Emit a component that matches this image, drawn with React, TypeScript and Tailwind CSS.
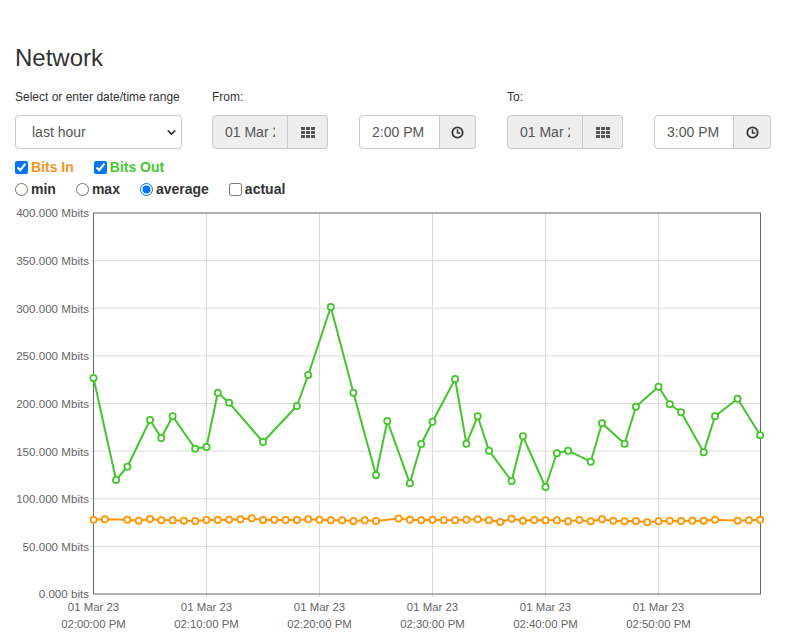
import { ChevronDown } from "lucide-react";

// Network traffic panel — date range controls + bits in/out chart

const GREEN = "#43c52c";
const ORANGE = "#ff9500";

// minute offset from 02:00 PM, value in Mbits
const BITS_OUT: [number, number][] = [
  [0, 226.8], [2, 119.7], [3, 133.6], [5, 182.7], [6, 163.8], [7, 186.6],
  [9, 152.6], [10, 154.3], [11, 211.3], [12, 200.8], [15, 159.6], [18, 197.4],
  [19, 229.9], [21, 301.3], [23, 211.3], [25, 124.6], [26, 181.6], [28, 116.2],
  [29, 157.5], [30, 180.9], [32, 225.7], [33, 157.8], [34, 186.6], [35, 150.4],
  [37, 118.6], [38, 165.6], [40, 112.3], [41, 147.7], [42, 150.4], [44, 138.9],
  [45, 179.2], [47, 157.8], [48, 196.6], [50, 217.6], [51, 199.2], [52, 190.8],
  [54, 148.8], [55, 186.6], [57, 205.0], [59, 166.6],
];

const BITS_IN: [number, number][] = [
  [0, 78.0], [1, 78.4], [3, 78.0], [4, 77.0], [5, 78.7], [6, 77.4], [7, 77.4],
  [8, 77.0], [9, 76.6], [10, 77.7], [11, 77.7], [12, 78.0], [13, 78.4],
  [14, 79.5], [15, 77.7], [16, 78.0], [17, 77.7], [18, 77.7], [19, 78.4],
  [20, 78.0], [21, 77.4], [22, 77.4], [23, 76.6], [24, 77.4], [25, 76.6],
  [27, 79.3], [28, 78.0], [29, 77.4], [30, 78.0], [31, 77.4], [32, 77.4],
  [33, 78.0], [34, 78.4], [35, 77.4], [36, 75.6], [37, 79.1], [38, 77.0],
  [39, 77.7], [40, 77.4], [41, 77.4], [42, 76.3], [43, 77.7], [44, 76.3],
  [45, 78.4], [46, 77.0], [47, 76.3], [48, 76.6], [49, 75.3], [50, 76.3],
  [51, 77.0], [52, 76.6], [53, 77.0], [54, 77.0], [55, 78.0], [57, 77.0],
  [58, 77.4], [59, 78.0],
];

const X0 = 93.5;
const X_PER_MIN = 11.3;
const X_END = 760.5;
const Y0 = 594;
const Y_TOP = 213;

const px = (m: number) => X0 + m * X_PER_MIN;
const py = (v: number) => Y0 - (v / 400) * (Y0 - Y_TOP);

function GridIcon() {
  return (
    <svg width="14" height="11" viewBox="0 0 14 11" fill="#555">
      {[0, 5, 10].map((x) =>
        [0, 4, 8].map((y) => <rect key={`${x}-${y}`} x={x} y={y} width="4" height="3" />),
      )}
    </svg>
  );
}

function ClockIcon() {
  return (
    <svg width="13" height="13" viewBox="0 0 13 13" fill="none" stroke="#3a3a3a">
      <circle cx="6.5" cy="6.5" r="5.2" strokeWidth="1.8" />
      <path d="M6.5 3.2V6.9H9.3" strokeWidth="1.5" />
    </svg>
  );
}

function DateGroup({ value, inputW }: { value: string; inputW: string }) {
  return (
    <div className="flex h-[34px]">
      <input
        readOnly
        value={value}
        className={`${inputW} h-full rounded-l-[4px] border border-[#ccc] bg-[#eee] px-[12px] text-[14px] text-[#555] outline-none`}
      />
      <div className="flex h-full w-[40px] items-center justify-center rounded-r-[4px] border-y border-r border-[#ccc] bg-[#eee]">
        <GridIcon />
      </div>
    </div>
  );
}

function TimeGroup({ value, inputW, addonW }: { value: string; inputW: string; addonW: string }) {
  return (
    <div className="flex h-[34px]">
      <input
        readOnly
        value={value}
        className={`${inputW} h-full rounded-l-[4px] border border-[#ccc] bg-white px-[12px] text-[14px] text-[#555] outline-none`}
      />
      <div className={`${addonW} flex h-full items-center justify-center rounded-r-[4px] border-y border-r border-[#ccc] bg-[#eee]`}>
        <ClockIcon />
      </div>
    </div>
  );
}

function Series({ data, color }: { data: [number, number][]; color: string }) {
  const points = data.map(([m, v]) => `${px(m).toFixed(1)},${py(v).toFixed(1)}`).join(" ");
  return (
    <g>
      <polyline points={points} fill="none" stroke={color} strokeWidth="2" strokeLinejoin="round" />
      {data.map(([m, v]) => (
        <circle key={m} cx={px(m)} cy={py(v)} r="3.1" fill="white" stroke={color} strokeWidth="1.8" />
      ))}
    </g>
  );
}

function Chart() {
  const yTicks = [0, 50, 100, 150, 200, 250, 300, 350, 400];
  const xTicks = [0, 10, 20, 30, 40, 50];
  return (
    <svg width="787" height="434" viewBox="0 200 787 434" className="block" fontFamily="'Liberation Sans', Arial, sans-serif">
      {yTicks.slice(1, -1).map((v) => (
        <line key={v} x1={X0 - 3} x2={X_END} y1={py(v)} y2={py(v)} stroke="#dadada" strokeWidth="1" />
      ))}
      {xTicks.slice(1).map((m) => (
        <line key={m} x1={px(m)} x2={px(m)} y1={Y_TOP} y2={Y0 + 3} stroke="#dadada" strokeWidth="1" />
      ))}
      <rect x={X0} y={Y_TOP} width={X_END - X0} height={Y0 - Y_TOP} fill="none" stroke="#666" strokeWidth="1" />
      {yTicks.map((v) => (
        <text key={v} x="89" y={py(v) + 4.4} textAnchor="end" fontSize="11.6" fill="#666">
          {v === 0 ? "0.000 bits" : `${v}.000 Mbits`}
        </text>
      ))}
      {xTicks.map((m) => (
        <g key={m}>
          <text x={px(m)} y="611" textAnchor="middle" fontSize="11.4" fill="#666">
            01 Mar 23
          </text>
          <text x={px(m)} y="628" textAnchor="middle" fontSize="11.4" fill="#666">
            {`02:${String(m).padStart(2, "0")}:00 PM`}
          </text>
        </g>
      ))}
      <Series data={BITS_OUT} color={GREEN} />
      <Series data={BITS_IN} color={ORANGE} />
    </svg>
  );
}

export default function App() {
  return (
    <div className="h-[634px] w-[787px] overflow-hidden bg-white font-['Liberation_Sans',Arial,sans-serif] text-[#333]">
      <div className="px-[15px] pt-[45px]">
        <h2 className="h-[26px] text-[24px] leading-[26px]">Network</h2>

        <div className="mt-[18px] flex">
          <div className="flex w-[167px] flex-col gap-[9px]">
            <div className="h-[17px] text-[12px] leading-[17px]">Select or enter date/time range</div>
            <div className="relative h-[34px]">
              <select
                defaultValue="hour"
                className="h-full w-full appearance-none rounded-[4px] border border-[#ccc] bg-white pl-[16px] text-[14px] text-[#555] outline-none"
              >
                <option value="hour">last hour</option>
                <option value="day">last day</option>
                <option value="week">last week</option>
              </select>
              <ChevronDown
                size={13}
                strokeWidth={3}
                className="pointer-events-none absolute top-[11px] right-[4px] text-[#333]"
              />
            </div>
          </div>

          <div className="ml-[30px] flex flex-col gap-[9px]">
            <div className="h-[17px] text-[12px] leading-[17px]">From:</div>
            <div className="flex gap-[31px]">
              <DateGroup value="01 Mar 23" inputW="w-[76px]" />
              <TimeGroup value="2:00 PM" inputW="w-[81px]" addonW="w-[36px]" />
            </div>
          </div>

          <div className="ml-[31px] flex flex-col gap-[9px]">
            <div className="h-[17px] text-[12px] leading-[17px]">To:</div>
            <div className="flex gap-[31px]">
              <DateGroup value="01 Mar 23" inputW="w-[76px]" />
              <TimeGroup value="3:00 PM" inputW="w-[80px]" addonW="w-[37px]" />
            </div>
          </div>
        </div>

        <div className="mt-[7px] flex h-[22px] items-center gap-[20px] text-[14px] font-bold">
          <label className="flex items-center gap-[3px]">
            <input type="checkbox" defaultChecked className="m-0 size-[13px]" />
            <span className="text-[#f7931e]">Bits In</span>
          </label>
          <label className="flex items-center gap-[3px]">
            <input type="checkbox" defaultChecked className="m-0 size-[13px]" />
            <span className="text-[#47c82e]">Bits Out</span>
          </label>
        </div>

        <div className="flex h-[22px] items-center gap-[20px] text-[14px] font-bold">
          <label className="flex items-center gap-[3px]">
            <input type="radio" name="agg" className="m-0 size-[13px]" />
            <span>min</span>
          </label>
          <label className="flex items-center gap-[3px]">
            <input type="radio" name="agg" className="m-0 size-[13px]" />
            <span>max</span>
          </label>
          <label className="flex items-center gap-[3px]">
            <input type="radio" name="agg" defaultChecked className="m-0 size-[13px]" />
            <span>average</span>
          </label>
          <label className="flex items-center gap-[3px]">
            <input type="checkbox" className="m-0 size-[13px]" />
            <span>actual</span>
          </label>
        </div>
      </div>

      <Chart />
    </div>
  );
}
